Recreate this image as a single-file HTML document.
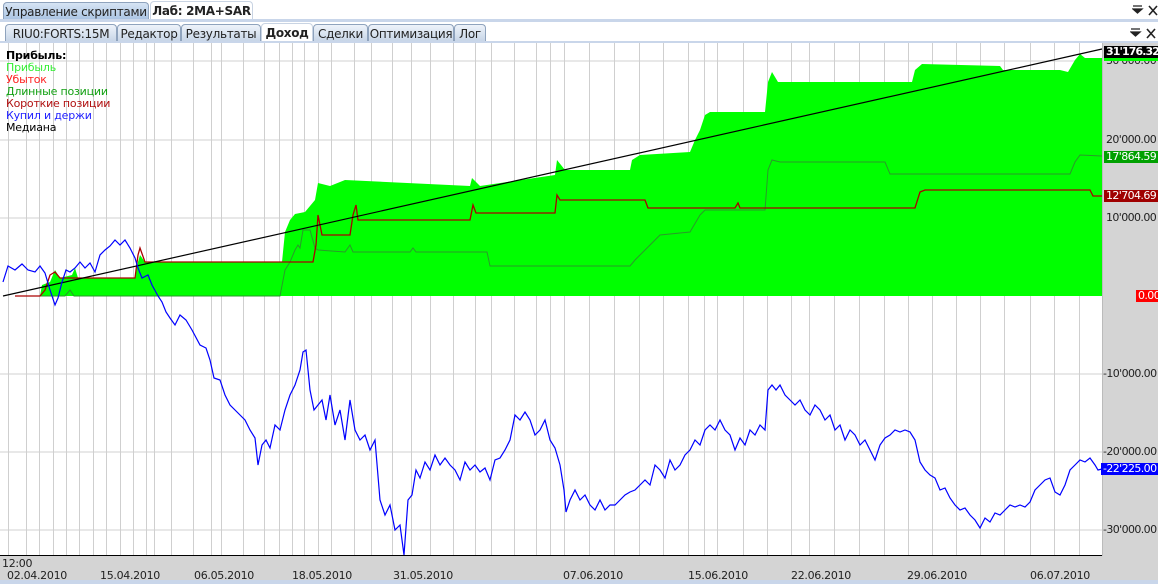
<!DOCTYPE html>
<html><head><meta charset="utf-8"><style>
*{margin:0;padding:0;box-sizing:border-box}
body{width:1158px;height:584px;overflow:hidden;background:#fff;font-family:"DejaVu Sans","Liberation Sans",sans-serif;font-size:12px;position:relative}
.tab{position:absolute;height:18px;border:1px solid #8fa3bd;border-bottom:none;border-radius:4px 4px 0 0;background:linear-gradient(#eef3fa,#c5d4e6);padding:2px 0 0 0;text-align:center;color:#222;font-size:12px;white-space:nowrap;font-family:"DejaVu Sans","Liberation Sans",sans-serif;letter-spacing:-0.3px}
.act{background:#fff;font-weight:bold;border-color:#c9d4e3}
.bar{position:absolute;left:0;width:1158px;height:3px;background:#c9d6ea}
.lab{position:absolute;left:6px;font-size:11px;font-family:"DejaVu Sans","Liberation Sans",sans-serif;line-height:12px;letter-spacing:-0.2px}
.ax{position:absolute;left:1106px;font-size:11px;font-family:"DejaVu Sans",sans-serif;color:#222;letter-spacing:-0.6px;line-height:12px;white-space:nowrap}
.bd{position:absolute;left:1104px;width:54px;font-size:11px;font-family:"DejaVu Sans",sans-serif;color:#fff;line-height:12px;padding-left:2px;letter-spacing:-0.6px;white-space:nowrap;overflow:hidden}
.dt{position:absolute;top:569px;font-size:11px;font-family:"DejaVu Sans",sans-serif;color:#222;letter-spacing:-0.3px}
</style></head><body>
<div class="tab" style="left:3px;top:2px;width:146px;border-radius:4px 4px 0 0;background:linear-gradient(#d6e4f4,#a9c3e3)">Управление скриптами</div>
<div class="tab act" style="left:150px;top:1px;width:103px;height:20px">Лаб: 2MA+SAR</div>
<div class="bar" style="top:19px"></div>
<svg style="position:absolute;left:1132px;top:5px" width="26" height="12"><path d="M1 1h9M1 4h9l-4.5 4z" stroke="#222" fill="#222" stroke-width="1.3"/><path d="M17 1l8 9M25 1l-8 9" stroke="#222" stroke-width="1.6"/></svg>
<div class="tab" style="left:5px;top:24px;width:112px">RIU0:FORTS:15M</div>
<div class="tab" style="left:117px;top:24px;width:64px">Редактор</div>
<div class="tab" style="left:181px;top:24px;width:80px">Результаты</div>
<div class="tab act" style="left:261px;top:23px;width:52px;height:19px">Доход</div>
<div class="tab" style="left:313px;top:24px;width:55px">Сделки</div>
<div class="tab" style="left:368px;top:24px;width:86px">Оптимизация</div>
<div class="tab" style="left:454px;top:24px;width:32px">Лог</div>
<div class="bar" style="top:41px;height:2px"></div>
<svg style="position:absolute;left:1130px;top:28px" width="26" height="12"><path d="M1 1h9M1 4h9l-4.5 4z" stroke="#222" fill="#222" stroke-width="1.3"/><path d="M17 1l8 9M25 1l-8 9" stroke="#222" stroke-width="1.6"/></svg>

<svg style="position:absolute;left:0;top:43px" width="1158" height="541">
<g transform="translate(0,-43)">
<rect x="1102" y="43" width="56" height="513" fill="#d4d4d4"/>
<rect x="0" y="556" width="1158" height="24" fill="#d4d4d4"/>
<rect x="0" y="580" width="1158" height="4" fill="#c9d6ea"/>
<g stroke="#e8e8e8" stroke-width="2">
<line x1="0" x2="1102" y1="61" y2="61"/><line x1="0" x2="1102" y1="140" y2="140"/><line x1="0" x2="1102" y1="218" y2="218"/><line x1="0" x2="1102" y1="374" y2="374"/><line x1="0" x2="1102" y1="452" y2="452"/><line x1="0" x2="1102" y1="530" y2="530"/>
</g>
<g stroke="#cfcfcf" stroke-width="1">
<path d="M8.5 43V555M26.5 43V555M39.5 43V555M53.5 43V555M66.5 43V555M79.5 43V555M93.5 43V555M106.5 43V555M120.5 43V555M133.5 43V555M146.5 43V555M154.5 43V555M171.5 43V555M193.5 43V555M211.5 43V555M221.5 43V555M243.5 43V555M264.5 43V555M279.5 43V555M292.5 43V555M304.5 43V555M318.5 43V555M331.5 43V555M354.5 43V555M371.5 43V555M392.5 43V555M411.5 43V555M430.5 43V555M453.5 43V555M475.5 43V555M491.5 43V555M514.5 43V555M536.5 43V555M550.5 43V555M564.5 43V555M589.5 43V555M614.5 43V555M639.5 43V555M663.5 43V555M688.5 43V555M704.5 43V555M717.5 43V555M743.5 43V555M767.5 43V555M791.5 43V555M809.5 43V555M834.5 43V555M859.5 43V555M884.5 43V555M908.5 43V555M932.5 43V555M956.5 43V555M980.5 43V555M1004.5 43V555M1030.5 43V555M1054.5 43V555M1079.5 43V555"/>
</g>
<polygon fill="#00ff00" points="40,296 42,285 50,282 55,270 60,278 72,275 75,268 78,278 135,278 138,262 140,255 145,262 282,262 285,232 290,220 295,214 305,212 315,200 318,183 330,186 345,180 470,186 472,178 480,186 555,175 557,160 565,170 630,170 632,160 640,155 690,152 695,140 700,130 705,115 710,112 765,112 768,82 772,72 778,82 870,82 912,82 915,70 922,64 1000,66 1003,70 1060,70 1068,72 1075,60 1080,54 1085,58 1102,58 1102,296"/>
<polyline fill="none" stroke="#2a9a2a" stroke-width="1" points="15,296 65,296 70,290 74,296 280,296 285,270 290,262 295,250 298,245 300,248 303,230 310,230 315,248 318,250 345,252 350,245 353,252 410,252 413,248 416,252 487,252 490,266 630,266 635,260 655,240 660,235 690,232 700,215 705,210 765,210 768,170 772,160 780,162 885,162 890,174 1070,174 1075,162 1080,155 1102,156"/>
<polyline fill="none" stroke="#aa0000" stroke-width="1.3" points="15,296 40,296 45,290 50,275 55,272 60,278 135,278 138,255 140,248 145,262 313,262 316,245 318,215 320,225 322,235 350,235 353,215 356,205 358,220 470,220 473,205 476,213 555,213 557,195 560,200 645,200 648,208 735,208 738,203 740,208 915,208 920,192 925,190 1090,190 1093,196 1102,196"/>
<line x1="3" y1="296" x2="1102" y2="49" stroke="#000" stroke-width="1.2"/>
<polyline fill="none" stroke="#0000ff" stroke-width="1.2" points="3,282 8,266 15,270 22,264 28,270 35,272 40,266 45,273 50,290 55,305 58,298 62,282 66,270 70,272 75,268 80,262 85,268 90,263 95,272 100,255 105,250 110,246 115,240 120,245 125,240 130,248 135,258 138,268 142,278 148,275 152,285 158,296 162,302 166,312 170,318 175,325 180,315 186,320 192,330 200,345 206,348 210,360 214,378 220,380 225,395 230,405 235,410 240,415 245,420 250,430 255,438 258,465 262,445 266,440 270,448 275,425 280,430 285,410 290,395 295,385 300,370 303,352 306,350 310,390 314,410 318,405 322,400 326,420 330,395 335,425 340,410 345,440 350,400 355,430 360,440 365,435 370,450 375,440 380,500 385,515 390,505 395,530 400,525 404,555 408,500 412,495 416,470 420,478 425,462 430,470 435,455 440,465 445,458 450,465 455,470 460,480 465,462 470,470 475,465 480,472 485,468 490,480 495,460 500,458 505,450 510,440 515,415 520,420 525,412 530,420 535,435 540,430 545,420 550,440 555,448 560,465 564,490 566,512 570,500 575,490 580,500 585,495 590,505 595,510 600,500 605,510 610,505 615,505 620,500 625,495 630,492 635,490 640,485 645,480 650,485 655,465 660,470 665,478 670,460 675,470 680,465 685,455 690,450 695,440 700,445 705,430 710,425 715,430 720,420 725,430 730,435 735,450 740,438 745,445 750,430 755,435 760,425 765,430 768,390 772,385 776,390 780,385 785,395 790,400 795,405 800,400 805,410 810,415 815,405 820,410 825,420 830,415 835,430 840,425 845,440 850,430 855,435 860,445 865,440 870,450 875,460 880,445 885,438 890,435 895,430 900,432 905,430 910,432 915,440 920,462 925,470 930,475 935,478 940,490 945,488 950,498 955,505 960,510 965,508 970,515 975,520 980,528 985,518 990,522 995,513 1000,515 1005,510 1010,505 1015,507 1020,505 1025,507 1030,502 1035,490 1040,485 1045,480 1050,478 1055,492 1060,495 1065,485 1070,470 1075,465 1080,460 1085,462 1090,458 1095,465 1098,470 1102,469"/>
<line x1="0" y1="555.5" x2="1102" y2="555.5" stroke="#000"/>
<line x1="1102.5" y1="43" x2="1102.5" y2="556" stroke="#bbb"/>
</g></svg>

<div class="lab" style="top:50px;font-weight:bold;color:#000">Прибыль:</div>
<div class="lab" style="top:62px;color:#33ee33">Прибыль</div>
<div class="lab" style="top:74px;color:#ff2020">Убыток</div>
<div class="lab" style="top:86px;color:#12a012">Длинные позиции</div>
<div class="lab" style="top:98px;color:#b01010">Короткие позиции</div>
<div class="lab" style="top:110px;color:#2020ff">Купил и держи</div>
<div class="lab" style="top:122px;color:#000">Медиана</div>

<div class="ax" style="top:55px">30'000.00</div>
<div class="ax" style="top:134px">20'000.00</div>
<div class="ax" style="top:212px">10'000.00</div>
<div class="ax" style="top:368px;left:1103px">-10'000.00</div>
<div class="ax" style="top:446px;left:1103px">-20'000.00</div>
<div class="ax" style="top:524px;left:1103px">-30'000.00</div>
<div class="bd" style="top:46px;background:#000;font-weight:bold;letter-spacing:-0.9px">31'176.32</div>
<div style="position:absolute;left:1104px;top:58px;width:54px;height:3px;background:#00ff00"></div>
<div class="bd" style="top:151px;background:#00a000">17'864.59</div>
<div class="bd" style="top:190px;background:#a00000">12'704.69</div>
<div class="bd" style="top:290px;left:1136px;width:22px;background:#ff0000">0.00</div>
<div class="bd" style="top:463px;left:1101px;width:57px;background:#0000ff">-22'225.00</div>

<div class="dt" style="left:2px;top:557px">12:00</div>
<div class="dt" style="left:7px">02.04.2010</div>
<div class="dt" style="left:100px">15.04.2010</div>
<div class="dt" style="left:194px">06.05.2010</div>
<div class="dt" style="left:292px">18.05.2010</div>
<div class="dt" style="left:393px">31.05.2010</div>
<div class="dt" style="left:563px">07.06.2010</div>
<div class="dt" style="left:688px">15.06.2010</div>
<div class="dt" style="left:791px">22.06.2010</div>
<div class="dt" style="left:907px">29.06.2010</div>
<div class="dt" style="left:1030px">06.07.2010</div>
</body></html>
